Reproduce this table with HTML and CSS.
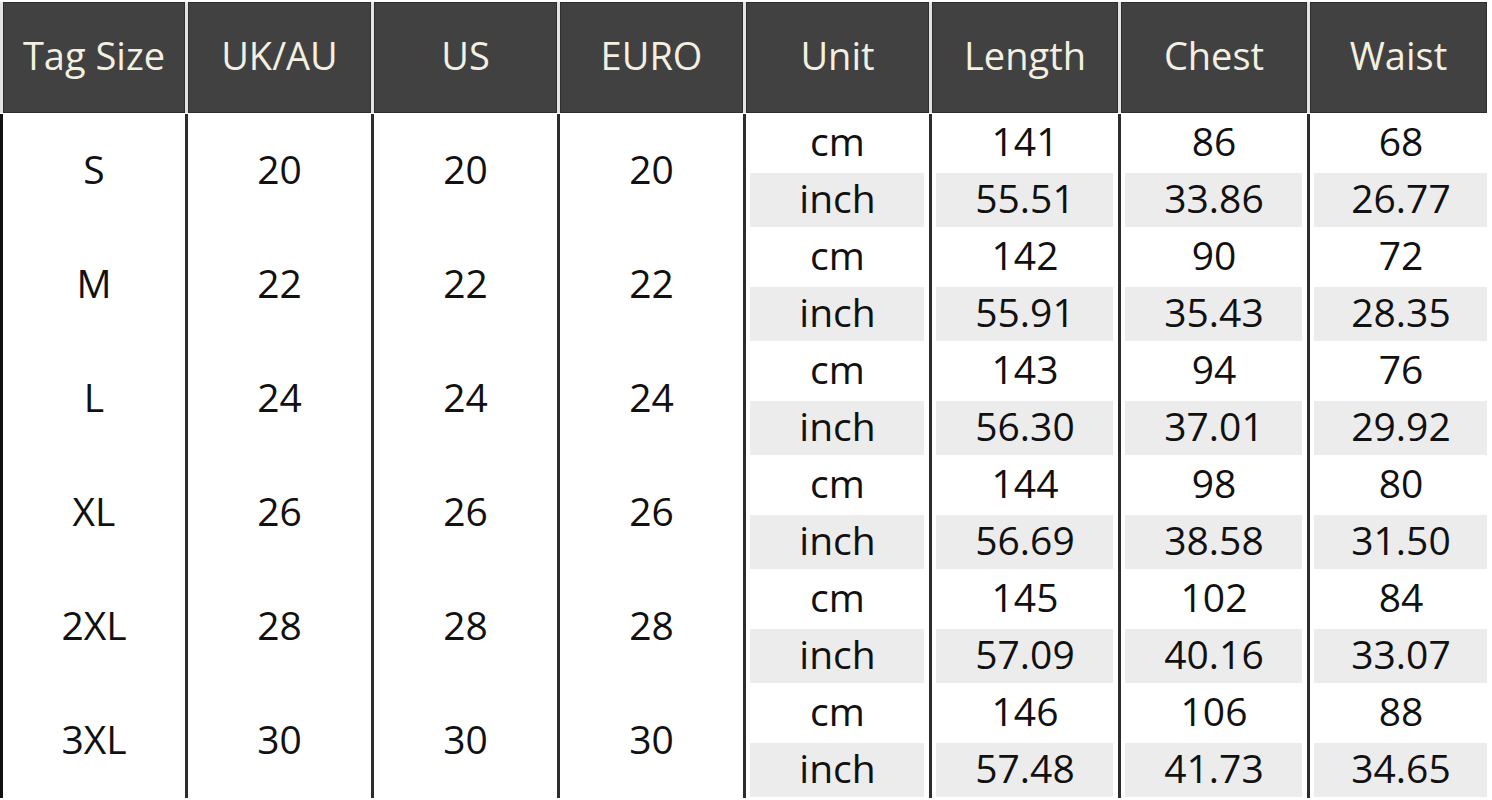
FILE: index.html
```html
<!DOCTYPE html>
<html>
<head>
<meta charset="utf-8">
<link rel="stylesheet" href="styles.css">
</head>
<body>
<div class="chart">
  <div class="head">
    <div class="hc">Tag Size</div>
    <div class="hc">UK/AU</div>
    <div class="hc">US</div>
    <div class="hc">EURO</div>
    <div class="hc">Unit</div>
    <div class="hc">Length</div>
    <div class="hc">Chest</div>
    <div class="hc last">Waist</div>
  </div>
  <div class="body">
    <div class="sz first">S</div><div class="sz">20</div><div class="sz">20</div><div class="sz">20</div>
    <div class="m">cm</div><div class="m">141</div><div class="m">86</div><div class="m">68</div>
    <div class="m in">inch</div><div class="m in">55.51</div><div class="m in">33.86</div><div class="m in">26.77</div>

    <div class="sz first">M</div><div class="sz">22</div><div class="sz">22</div><div class="sz">22</div>
    <div class="m">cm</div><div class="m">142</div><div class="m">90</div><div class="m">72</div>
    <div class="m in">inch</div><div class="m in">55.91</div><div class="m in">35.43</div><div class="m in">28.35</div>

    <div class="sz first">L</div><div class="sz">24</div><div class="sz">24</div><div class="sz">24</div>
    <div class="m">cm</div><div class="m">143</div><div class="m">94</div><div class="m">76</div>
    <div class="m in">inch</div><div class="m in">56.30</div><div class="m in">37.01</div><div class="m in">29.92</div>

    <div class="sz first">XL</div><div class="sz">26</div><div class="sz">26</div><div class="sz">26</div>
    <div class="m">cm</div><div class="m">144</div><div class="m">98</div><div class="m">80</div>
    <div class="m in">inch</div><div class="m in">56.69</div><div class="m in">38.58</div><div class="m in">31.50</div>

    <div class="sz first">2XL</div><div class="sz">28</div><div class="sz">28</div><div class="sz">28</div>
    <div class="m">cm</div><div class="m">145</div><div class="m">102</div><div class="m">84</div>
    <div class="m in">inch</div><div class="m in">57.09</div><div class="m in">40.16</div><div class="m in">33.07</div>

    <div class="sz first">3XL</div><div class="sz">30</div><div class="sz">30</div><div class="sz">30</div>
    <div class="m">cm</div><div class="m">146</div><div class="m">106</div><div class="m">88</div>
    <div class="m in">inch</div><div class="m in">57.48</div><div class="m in">41.73</div><div class="m in">34.65</div>
  </div>
</div>
</body>
</html>
```

FILE: styles.css
```css
html, body {
  margin: 0;
  padding: 0;
  background: #ffffff;
}
body {
  width: 1492px;
  height: 800px;
  overflow: hidden;
  font-family: "Open Sans", "Noto Sans", sans-serif;
}
.chart {
  width: 1492px;
  padding-top: 2px;
}
.head, .body {
  display: grid;
  grid-template-columns: 185px 186px 186px 186px 186px 189px 189px 185px;
}
.head {
  height: 111px;
  margin-bottom: 1px;
}
.hc {
  background: #414141;
  border-left: 3px solid #e4e4e4;
  box-shadow: inset 0 0 0 1px #2e2e2e;
  color: #f3f0e2;
  font-size: 38px;
  font-weight: 500;
  display: flex;
  align-items: center;
  justify-content: center;
  padding-bottom: 6px;
}
.hc.last {
  margin-right: 5px;
}
.body {
  grid-auto-rows: 57px;
}
.sz, .m {
  border-left: 3px solid #2c2c2c;
  color: #111111;
  font-size: 39px;
  display: flex;
  align-items: center;
  justify-content: center;
  padding-bottom: 5px;
}
.sz {
  grid-row: span 2;
}
.sz.first {
  border-left-color: #111111;
}
.m.in {
  background: #ececec;
  box-shadow: inset 4px 0 0 #ffffff, inset -5px 0 0 #ffffff, inset 0 2px 0 #ffffff, inset 0 -1px 0 #ffffff;
}
```
